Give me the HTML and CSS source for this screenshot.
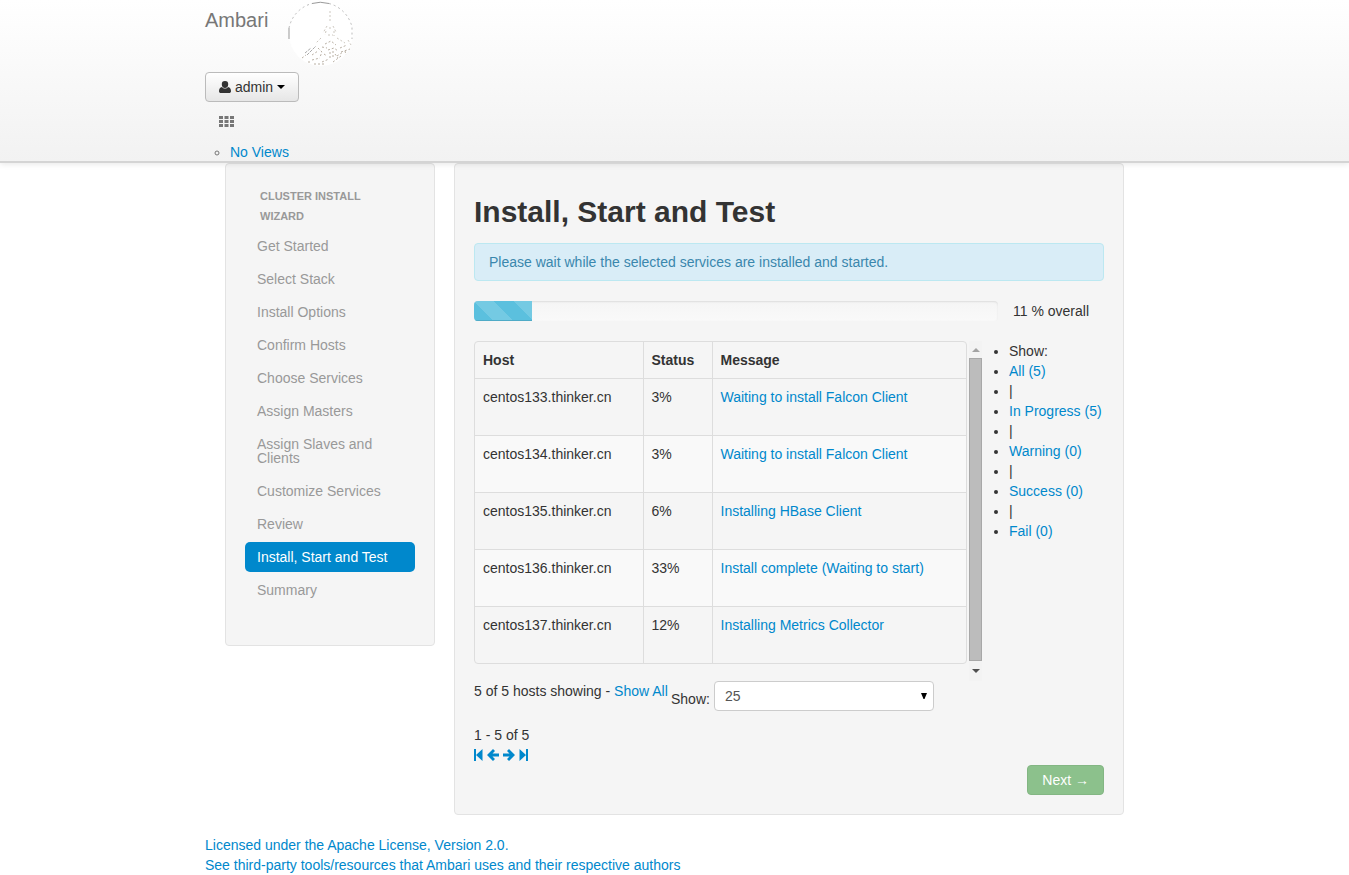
FILE: index.html
```html
<!DOCTYPE html>
<html lang="en">
<head>
<meta charset="utf-8">
<title>Ambari</title>
<link rel="stylesheet" href="styles.css">
</head>
<body>
<header class="navbar">
  <div class="container">
    <div class="brand-row">
      <a class="brand" href="#">Ambari</a>
      <svg class="logo" viewBox="0 0 66 66" width="66" height="66" aria-hidden="true">
        <circle cx="33" cy="33" r="32" fill="#fff"/>
        <path d="M1 38V27M24 2.500Q32 0 41 2.500" fill="none" stroke="#999"/>
        <path d="M1 27A32 32 0 0 1 24 2.500M41 2.500A32 32 0 0 1 64 26V38" fill="none" stroke="#bbb" stroke-dasharray="2 3"/>
        <path d="M42 10V22M39 25L35 32M45 25L48 31M38 30L37 34M46 30V35M41 27H43M40 34H45M33 37L28 42M49 37L57 42M60 39L63 44" fill="none" stroke="#cdc8c0" stroke-dasharray="2 2"/>
        <path d="M19 54L28 45M17 52L23 47" fill="none" stroke="#aaa" stroke-dasharray="3 1"/>
        <path d="M24 54L30 50M14 57L18 54M30 47L34 51L32 56M37 43L43 40L48 44M40 49L46 47L50 50M42 51V58M45 50V57M52 47L59 44M53 51L62 48M24 59L32 57M34 61L41 58M45 61L53 55M26 63H38M34 46L39 47M49 55L55 51M20 61H23M36 53L39 55M47 53L50 57M57 50L58 54" fill="none" stroke="#b9b0a4" stroke-dasharray="2 2"/>
      </svg>
    </div>
    <button class="btn user-btn" type="button">
      <svg width="12" height="14" viewBox="0 0 12 14" aria-hidden="true"><path d="M6 1a3.200 3.200 0 0 1 3.200 3.400C9.200 6.500 7.900 8 6 8S2.800 6.500 2.800 4.400A3.200 3.200 0 0 1 6 1zM3 7c.8 1 1.800 1.600 3 1.600S8.200 8 9 7c2.200.3 3 2 3 4.200 0 1.100-.8 1.800-1.800 1.800H1.800C.8 13 0 12.300 0 11.200 0 9 .8 7.300 3 7z" fill="#333"/></svg>
      <span>admin</span><span class="caret"></span>
    </button>
    <button class="views-btn" type="button" aria-label="Views">
      <svg width="15" height="11" viewBox="0 0 15 11" fill="#777" aria-hidden="true"><path d="M0 0h4v3H0zM5.500 0h4v3h-4zM11 0h4v3h-4zM0 4h4v3H0zM5.500 4h4v3h-4zM11 4h4v3h-4zM0 8h4v3H0zM5.500 8h4v3h-4zM11 8h4v3h-4z"/></svg>
    </button>
    <ul class="views"><li><a href="#">No Views</a></li></ul>
  </div>
</header>

<div class="container wizard">
  <nav class="well sidebar">
    <h2 class="nav-header">Cluster Install Wizard</h2>
    <ul class="steps">
      <li><a>Get Started</a></li>
      <li><a>Select Stack</a></li>
      <li><a>Install Options</a></li>
      <li><a>Confirm Hosts</a></li>
      <li><a>Choose Services</a></li>
      <li><a>Assign Masters</a></li>
      <li><a>Assign Slaves and Clients</a></li>
      <li><a>Customize Services</a></li>
      <li><a>Review</a></li>
      <li><a class="active" href="#">Install, Start and Test</a></li>
      <li><a>Summary</a></li>
    </ul>
  </nav>

  <main class="well content">
    <h1>Install, Start and Test</h1>
    <p class="alert">Please wait while the selected services are installed and started.</p>

    <div class="progress-row">
      <div class="progress"><div class="bar" style="width: 11%"></div></div>
      <span>11 % overall</span>
    </div>

    <div class="hosts">
      <div class="table-scroll">
        <div class="table-box">
        <table>
          <thead><tr><th class="host">Host</th><th class="status">Status</th><th>Message</th></tr></thead>
          <tbody>
            <tr><td>centos133.thinker.cn</td><td>3%</td><td><a href="#">Waiting to install Falcon Client</a></td></tr>
            <tr><td>centos134.thinker.cn</td><td>3%</td><td><a href="#">Waiting to install Falcon Client</a></td></tr>
            <tr><td>centos135.thinker.cn</td><td>6%</td><td><a href="#">Installing HBase Client</a></td></tr>
            <tr><td>centos136.thinker.cn</td><td>33%</td><td><a href="#">Install complete (Waiting to start)</a></td></tr>
            <tr><td>centos137.thinker.cn</td><td>12%</td><td><a href="#">Installing Metrics Collector</a></td></tr>
          </tbody>
        </table>
        </div>
        <div class="scrollbar">
          <span class="arrow up"></span><span class="thumb"></span><span class="arrow down"></span>
        </div>
      </div>
      <ul class="filters">
        <li>Show:</li>
        <li><a href="#">All (5)</a></li>
        <li>|</li>
        <li><a href="#">In Progress (5)</a></li>
        <li>|</li>
        <li><a href="#">Warning (0)</a></li>
        <li>|</li>
        <li><a href="#">Success (0)</a></li>
        <li>|</li>
        <li><a href="#">Fail (0)</a></li>
      </ul>
    </div>

    <div class="paging">
      <span class="showing">5 of 5 hosts showing - <a href="#">Show All</a></span>
      <label for="page-size">Show:</label>
      <div class="select-box">
        <select id="page-size"><option>25</option></select>
        <svg width="6" height="7" viewBox="0 0 6 7" aria-hidden="true"><path d="M0 0h6L3.500 6h-1z"/></svg>
      </div>
    </div>
    <div class="range">1 - 5 of 5</div>
    <div class="pager">
      <a href="#" aria-label="First"><svg width="9" height="12" viewBox="0 0 9 12"><path d="M0 0h2v12H0zM8.500 0v12L2 6z"/></svg></a>
      <a href="#" aria-label="Previous"><svg width="12" height="12" viewBox="0 0 12 12"><path d="M6 0L8 2 5.500 4.500H12v3H5.500L8 10l-2 2L0 6z"/></svg></a>
      <a href="#" aria-label="Next"><svg width="12" height="12" viewBox="0 0 12 12"><path d="M6 0L4 2l2.500 2.500H0v3h6.500L4 10l2 2 6-6z"/></svg></a>
      <a href="#" aria-label="Last"><svg width="9" height="12" viewBox="0 0 9 12"><path d="M7 0h2v12H7zM.5 0v12L7 6z"/></svg></a>
    </div>
    <div class="actions"><button class="btn next-btn" type="button" disabled>Next →</button></div>
  </main>
</div>

<footer class="container footer">
  <a href="#">Licensed under the Apache License, Version 2.0.</a>
  <a href="#">See third-party tools/resources that Ambari uses and their respective authors</a>
</footer>
</body>
</html>
```

FILE: styles.css
```css
* { box-sizing: border-box; }
body {
  margin: 0;
  background: #fff;
  color: #333;
  font: 14px/20px "Liberation Sans", Arial, sans-serif;
}
a { color: #0088cc; text-decoration: none; }
ul, h1, h2, p { margin: 0; padding: 0; }
svg { display: block; }
.container { width: 100%; max-width: 939px; margin: 0 auto; }

.navbar {
  position: relative;
  background: linear-gradient(#fff, #f2f2f2);
  border-bottom: 2px solid #d4d4d4;
  box-shadow: 0 1px 6px rgba(0, 0, 0, 0.1);
}
.brand-row { display: flex; gap: 20px; height: 72px; }
.brand { padding-top: 10px; font-size: 20px; color: #777; }
.logo { margin-top: 1px; }
.btn {
  display: flex;
  align-items: center;
  height: 30px;
  border-radius: 4px;
  font: inherit;
}
.user-btn {
  gap: 4px;
  padding: 0 13px;
  color: #333;
  background: linear-gradient(#fff, #e6e6e6);
  border: 1px solid #bbb;
}
.caret {
  border: 4px solid transparent;
  border-top-color: #000;
  border-bottom: 0;
}
.views-btn {
  display: block;
  margin: 0;
  padding: 14px 14px 15px;
  border: 0;
  background: none;
}
.views { padding-left: 25px; list-style: circle; color: #777; }
.views li { height: 19px; }

.wizard { display: flex; align-items: flex-start; gap: 19px; padding: 0 20px; }
.well {
  background: #f5f5f5;
  border: 1px solid #e3e3e3;
  border-radius: 4px;
}
.sidebar { flex: 0 0 210px; padding: 22px 19px 40px; }
.nav-header {
  padding: 0 15px 5px;
  font-size: 11px;
  line-height: 20px;
  color: #999;
  text-transform: uppercase;
}
.steps { display: grid; gap: 3px; list-style: none; }
.steps a {
  display: block;
  padding: 8px 12px;
  line-height: 14px;
  color: #999;
  border-radius: 5px;
}
.steps .active { background: #0088cc; color: #fff; }

.content { flex: 1; min-width: 0; padding: 28px 19px 19px; }
h1 { margin-bottom: 11px; font-size: 30px; line-height: 40px; }
.alert {
  margin-bottom: 20px;
  padding: 8px 14px;
  color: #3a87ad;
  background: #d9edf7;
  border: 1px solid #bce8f1;
  border-radius: 4px;
}
.progress-row { display: flex; gap: 15px; margin-bottom: 20px; padding-right: 15px; }
.progress {
  flex: 1;
  height: 20px;
  overflow: hidden;
  background: linear-gradient(#f5f5f5, #f9f9f9);
  border-radius: 4px;
  box-shadow: inset 0 1px 2px rgba(0, 0, 0, 0.1);
}
.bar {
  height: 20px;
  background: linear-gradient(45deg, #74cae3 25%, #5bc0de 25%, #5bc0de 50%, #74cae3 50%, #74cae3 75%, #5bc0de 75%) 0 0 / 40px 40px;
  box-shadow: inset 0 -1px 0 #4fabc7;
}

.hosts { display: flex; }
.table-scroll { flex: 1; display: flex; gap: 2px; height: 340px; }
.table-box {
  flex: 1;
  align-self: flex-start;
  border: 1px solid #ddd;
  border-radius: 4px;
  overflow: hidden;
}
table { width: 100%; border-collapse: collapse; table-layout: fixed; }
th, td {
  padding: 8px;
  text-align: left;
  vertical-align: top;
  border-left: 1px solid #ddd;
}
th:first-child, td:first-child { border-left: 0; }
th { height: 36px; }
td { height: 57px; border-top: 1px solid #ddd; }
tr:last-child td { height: 56px; }
.host { width: 168px; }
.status { width: 69px; }
tbody tr:nth-child(even) { background: #f9f9f9; }
.scrollbar { display: flex; flex-direction: column; width: 13px; background: #f3f3f3; }
.thumb { flex: 1; background: #bcbcbc; border: 1px solid #a8a8a8; }
.arrow { height: 17px; display: flex; align-items: center; justify-content: center; }
.arrow::before { content: ""; border: 4px solid transparent; }
.up::before { border-bottom-color: #a3a3a3; border-top: 0; }
.down { height: 20px; }
.down::before { border-top-color: #505050; border-bottom: 0; }
.filters { flex: 0 0 122px; padding-left: 27px; }
.filters li { white-space: nowrap; }

.paging { display: flex; height: 44px; }
.showing { min-width: 197px; }
.paging label { padding: 8px 4px 0 0; }
.select-box { position: relative; width: 220px; }
.select-box select {
  width: 100%;
  height: 30px;
  padding: 4px 10px;
  font: inherit;
  color: #555;
  background: #fff;
  border: 1px solid #ccc;
  border-radius: 4px;
  appearance: none;
}
.select-box svg { position: absolute; right: 7px; top: 12px; }
.pager { display: flex; align-items: center; gap: 4px; height: 20px; fill: #0088cc; }
.actions { display: flex; justify-content: flex-end; }
.next-btn {
  padding: 0 14px;
  color: #fff;
  background: #8cc18c;
  border: 1px solid #83b683;
}
.footer { display: grid; justify-items: start; padding-top: 20px; }
```
